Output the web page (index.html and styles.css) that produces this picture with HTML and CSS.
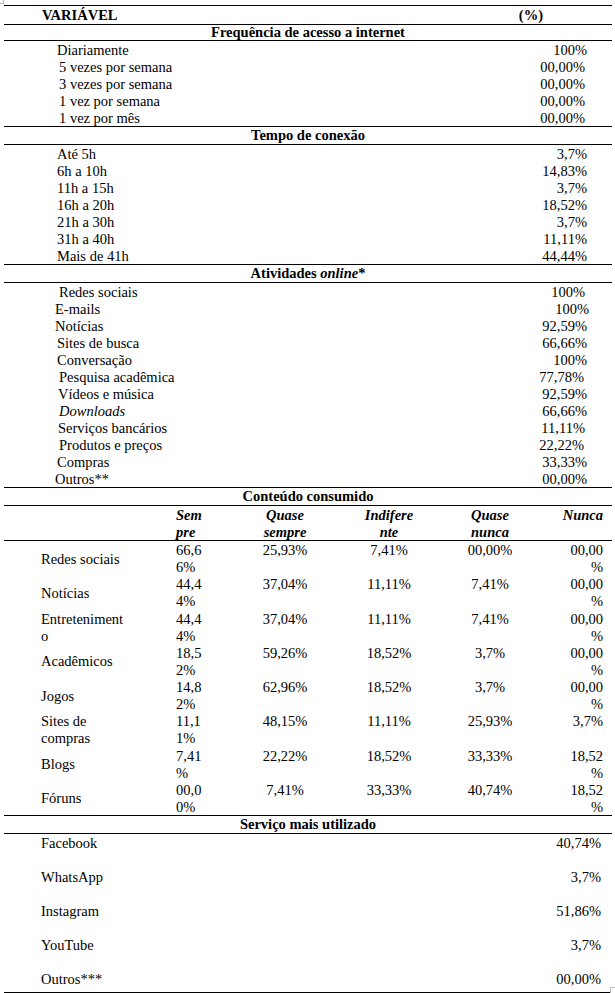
FILE: index.html
```html
<!DOCTYPE html>
<html lang="pt">
<head>
<meta charset="utf-8">
<title>Tabela</title>
<link rel="stylesheet" href="styles.css">
</head>
<body>
<span class="handle handle-tl"></span>
<div class="sheet">
  <div class="head-row">
    <span class="var">VARIÁVEL</span>
    <span class="pct">(%)</span>
  </div>

  <div class="section-title first">Frequência de acesso a internet</div>
  <div class="list">
    <div class="row"><span>Diariamente</span><span>100%</span></div>
    <div class="row in55 vr27"><span>5 vezes por semana</span><span>00,00%</span></div>
    <div class="row in55 vr27"><span>3 vezes por semana</span><span>00,00%</span></div>
    <div class="row in55 vr27"><span>1 vez por semana</span><span>00,00%</span></div>
    <div class="row in55 vr27"><span>1 vez por mês</span><span>00,00%</span></div>
  </div>

  <div class="section-title">Tempo de conexão</div>
  <div class="list">
    <div class="row"><span>Até 5h</span><span>3,7%</span></div>
    <div class="row"><span>6h a 10h</span><span>14,83%</span></div>
    <div class="row"><span>11h a 15h</span><span>3,7%</span></div>
    <div class="row"><span>16h a 20h</span><span>18,52%</span></div>
    <div class="row"><span>21h a 30h</span><span>3,7%</span></div>
    <div class="row"><span>31h a 40h</span><span>11,11%</span></div>
    <div class="row"><span>Mais de 41h</span><span>44,44%</span></div>
  </div>

  <div class="section-title">Atividades <i>online</i>*</div>
  <div class="list">
    <div class="row in55 vr27"><span>Redes sociais</span><span>100%</span></div>
    <div class="row in51 vr23"><span>E-mails</span><span>100%</span></div>
    <div class="row in51"><span>Notícias</span><span>92,59%</span></div>
    <div class="row"><span>Sites de busca</span><span>66,66%</span></div>
    <div class="row"><span>Conversação</span><span>100%</span></div>
    <div class="row in55 vr28"><span>Pesquisa acadêmica</span><span>77,78%</span></div>
    <div class="row in54"><span>Vídeos e música</span><span>92,59%</span></div>
    <div class="row in55"><span class="it">Downloads</span><span>66,66%</span></div>
    <div class="row in54 vr27"><span>Serviços bancários</span><span>11,11%</span></div>
    <div class="row in55 vr28"><span>Produtos e preços</span><span>22,22%</span></div>
    <div class="row"><span>Compras</span><span>33,33%</span></div>
    <div class="row in51"><span>Outros**</span><span>00,00%</span></div>
  </div>

  <div class="section-title">Conteúdo consumido</div>
  <div class="ct-head">
    <div class="c1"></div>
    <div class="c2">Sempre</div>
    <div class="c3">Quase sempre</div>
    <div class="c4">Indiferente</div>
    <div class="c5">Quase nunca</div>
    <div class="c6">Nunca</div>
  </div>
  <div class="ct-body">
    <div class="ct-row">
      <div class="c1">Redes sociais</div><div class="c2">66,66%</div><div class="c3">25,93%</div><div class="c4">7,41%</div><div class="c5">00,00%</div><div class="c6">00,00%</div>
    </div>
    <div class="ct-row">
      <div class="c1">Notícias</div><div class="c2">44,44%</div><div class="c3">37,04%</div><div class="c4">11,11%</div><div class="c5">7,41%</div><div class="c6">00,00%</div>
    </div>
    <div class="ct-row">
      <div class="c1">Entretenimento</div><div class="c2">44,44%</div><div class="c3">37,04%</div><div class="c4">11,11%</div><div class="c5">7,41%</div><div class="c6">00,00%</div>
    </div>
    <div class="ct-row">
      <div class="c1">Acadêmicos</div><div class="c2">18,52%</div><div class="c3">59,26%</div><div class="c4">18,52%</div><div class="c5">3,7%</div><div class="c6">00,00%</div>
    </div>
    <div class="ct-row">
      <div class="c1">Jogos</div><div class="c2">14,82%</div><div class="c3">62,96%</div><div class="c4">18,52%</div><div class="c5">3,7%</div><div class="c6">00,00%</div>
    </div>
    <div class="ct-row">
      <div class="c1">Sites de compras</div><div class="c2">11,11%</div><div class="c3">48,15%</div><div class="c4">11,11%</div><div class="c5">25,93%</div><div class="c6">3,7%</div>
    </div>
    <div class="ct-row">
      <div class="c1">Blogs</div><div class="c2">7,41%</div><div class="c3">22,22%</div><div class="c4">18,52%</div><div class="c5">33,33%</div><div class="c6">18,52%</div>
    </div>
    <div class="ct-row">
      <div class="c1">Fóruns</div><div class="c2">00,00%</div><div class="c3">7,41%</div><div class="c4">33,33%</div><div class="c5">40,74%</div><div class="c6">18,52%</div>
    </div>
  </div>

  <div class="section-title">Serviço mais utilizado</div>
  <div class="services">
    <div class="srow"><span>Facebook</span><span>40,74%</span></div>
    <div class="srow"><span>WhatsApp</span><span>3,7%</span></div>
    <div class="srow"><span>Instagram</span><span>51,86%</span></div>
    <div class="srow"><span>YouTube</span><span>3,7%</span></div>
    <div class="srow"><span>Outros***</span><span>00,00%</span></div>
  </div>
</div>
<span class="handle handle-br"></span>
</body>
</html>
```

FILE: styles.css
```css
html, body {
  margin: 0;
  padding: 0;
  background: #ffffff;
}

body {
  position: relative;
  width: 615px;
  height: 993px;
  overflow: hidden;
  font-family: "Liberation Serif", "Times New Roman", serif;
  font-size: 14.5px;
  color: #000;
}

.sheet {
  margin: 5px 3px 0 4px;
  border-top: 1px solid #000;
  border-bottom: 1px solid #000;
}

.head-row {
  display: flex;
  justify-content: space-between;
  height: 18px;
  line-height: 18px;
  font-weight: bold;
  padding-left: 38px;
  padding-right: 69px;
}

.section-title {
  border-top: 1px solid #000;
  border-bottom: 1px solid #000;
  height: 17px;
  line-height: 17px;
  text-align: center;
  font-weight: bold;
}

.section-title.first {
  height: 15px;
  line-height: 15px;
}

.list {
  display: flex;
  flex-direction: column;
}

.row {
  box-sizing: border-box;
  display: flex;
  justify-content: space-between;
  height: 17px;
  padding-top: 1px;
  line-height: 17px;
  padding-left: 53px;
  padding-right: 25px;
}

.in51 { padding-left: 51px; }
.in54 { padding-left: 54px; }
.in55 { padding-left: 55px; }
.vr23 { padding-right: 23px; }
.vr27 { padding-right: 27px; }
.vr28 { padding-right: 28px; }

.it { font-style: italic; }

/* Conteúdo consumido table */
.ct-head,
.ct-row {
  box-sizing: border-box;
  display: grid;
  grid-template-columns: 168px 43px 140px 68px 134px 55px;
  line-height: 17px;
}

.ct-head {
  height: 35px;
  padding-top: 1px;
  border-bottom: 1px solid #000;
  font-weight: bold;
  font-style: italic;
}

.ct-row {
  height: 34.25px;
  padding-top: 1px;
}

.ct-head > div,
.ct-row > div {
  overflow-wrap: anywhere;
  min-width: 0;
}

.c1 {
  padding-left: 37px;
  padding-right: 46px;
  align-self: center;
}

.c2 {
  padding-left: 4px;
  padding-right: 12px;
  text-align: left;
}

.c3 {
  padding: 0 35px;
  text-align: center;
}

.c4 {
  padding: 0 8px;
  text-align: center;
}

.c5 {
  padding: 0 33px;
  text-align: center;
}

.c6 {
  padding-left: 4px;
  padding-right: 9px;
  text-align: right;
}

/* Serviço mais utilizado */
.services {
  display: flex;
  flex-direction: column;
  row-gap: 17px;
  padding-top: 1px;
  padding-bottom: 4px;
}

.srow {
  display: flex;
  justify-content: space-between;
  height: 17px;
  line-height: 17px;
  padding-left: 37px;
  padding-right: 11px;
}

/* Word table handles */
.handle {
  position: absolute;
  width: 5px;
  height: 5px;
  border: 1px solid #b8b8b8;
  background: #fff;
}

.handle-tl {
  left: -3px;
  top: -3px;
}

.handle-br {
  left: 610px;
  top: 987px;
}
```
